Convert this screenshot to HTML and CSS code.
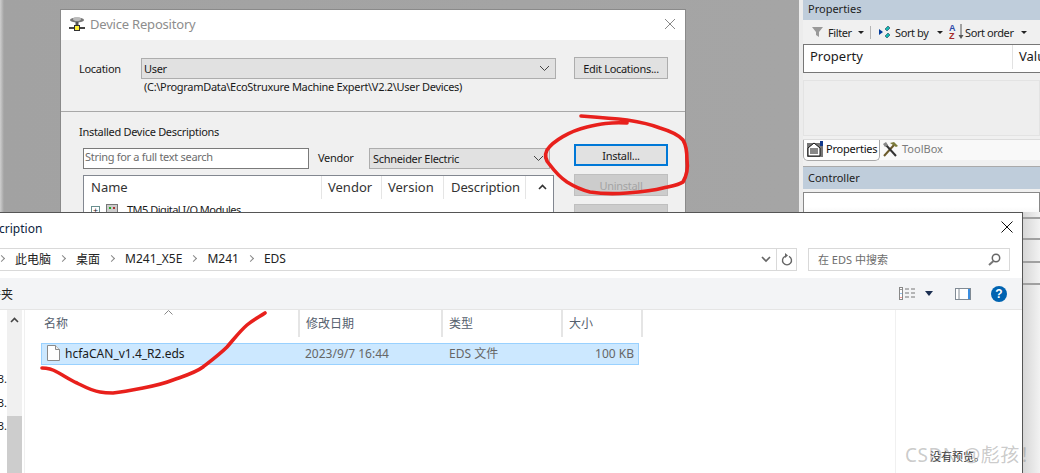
FILE: index.html
```html
<!DOCTYPE html>
<html lang="zh">
<head>
<meta charset="utf-8">
<title>Device Repository</title>
<link rel="stylesheet" href="styles.css">
</head>
<body>
<div class="desktop">

  <section class="repo">
    <header class="repo-title">
      <svg class="repo-icon" width="18" height="16" viewBox="0 0 18 16"><ellipse cx="8" cy="4" rx="7" ry="2.5" fill="#777"/><ellipse cx="8" cy="3" rx="4" ry="2" fill="#bbb"/><rect x="6.500" y="6" width="3" height="4" fill="#555"/><rect x="0" y="11" width="16" height="2" fill="#444"/><rect x="5.500" y="9.500" width="5" height="5" fill="#ffee33" stroke="#333"/></svg>
      <span class="repo-name">Device Repository</span>
      <svg class="close-light" width="12" height="12" viewBox="0 0 12 12"><path d="M1 1l10 10M11 1L1 11" stroke="#888" fill="none"/></svg>
    </header>
    <div class="repo-location">
      <span class="label-loc">Location</span>
      <div class="loc-fields">
        <div class="select select-wide"><span>User</span><svg width="11" height="7" viewBox="0 0 11 7"><path d="M1 1l4.500 4.500L10 1" stroke="#444" fill="none"/></svg></div>
        <div class="loc-path">(C:\ProgramData\EcoStruxure Machine Expert\V2.2\User Devices)</div>
      </div>
      <button class="btn btn-edit">Edit Locations...</button>
    </div>
    <div class="repo-installed">
      <div class="installed-main">
        <div class="installed-title">Installed Device Descriptions</div>
        <div class="search-row">
          <div class="search-input">String for a full text search</div>
          <span class="vendor-label">Vendor</span>
          <div class="select select-vendor"><span>Schneider Electric</span><svg width="11" height="7" viewBox="0 0 11 7"><path d="M1 1l4.500 4.500L10 1" stroke="#444" fill="none"/></svg></div>
        </div>
        <div class="list">
          <div class="list-head">
            <span class="col col-name">Name</span>
            <span class="col col-vendor">Vendor</span>
            <span class="col col-version">Version</span>
            <span class="col col-desc">Description</span>
            <span class="col col-scroll"><svg width="9" height="6" viewBox="0 0 9 6"><path d="M1 5l3.500-3.500L8 5" stroke="#333" stroke-width="1.600" fill="none"/></svg></span>
          </div>
          <div class="list-row">
            <span class="plus">+</span>
            <svg width="12" height="12" viewBox="0 0 12 12"><rect x=".5" y=".5" width="11" height="11" fill="#ccc" stroke="#777"/><rect x="3" y="3" width="2" height="2" fill="#2a2"/><rect x="7" y="3" width="2" height="2" fill="#a33"/></svg>
            <span class="row-text">TM5 Digital I/O Modules</span>
          </div>
        </div>
      </div>
      <div class="installed-buttons">
        <button class="btn btn-primary">Install...</button>
        <button class="btn btn-off">Uninstall</button>
        <button class="btn btn-off">Export</button>
      </div>
    </div>
  </section>

  <aside class="side">
    <div class="side-head">Properties</div>
    <div class="side-tools">
      <svg class="ic-filter" width="11" height="10" viewBox="0 0 11 10"><path d="M0 0h11L7 5v5L4 8V5z" fill="#999"/></svg>
      <span class="tool-text t-filter">Filter</span><i class="caret c-filter"></i><i class="tool-sep"></i>
      <svg class="ic-sortby" width="12" height="13" viewBox="0 0 12 13"><path d="M0 3l4 3-4 3z" fill="#003b9b"/><path d="M6 3l3-3 2 2-3 3zM6 10l3-3 2 2-3 3z" fill="#14b8b0" stroke="#124" stroke-width=".5"/></svg>
      <span class="tool-text t-sortby">Sort by</span><i class="caret c-sortby"></i>
      <svg class="ic-order" width="16" height="16" viewBox="0 0 16 16"><text x="0" y="7" class="az az-a">A</text><text x="0" y="15" class="az az-z">Z</text><path d="M12 0v11" stroke="#555"/><path d="M9.500 11h5L12 15z" fill="#555"/></svg>
      <span class="tool-text">Sort order</span><i class="caret c-order"></i>
    </div>
    <div class="grid-head"><span class="grid-prop">Property</span><span class="grid-val">Value</span></div>
    <div class="side-desc"></div>
    <div class="tabs">
      <div class="tab tab-on">
        <svg width="16" height="16" viewBox="0 0 16 16"><rect x="0" y="2" width="16" height="14" fill="#777"/><path d="M1 7l6-5 6 5v8H1z" fill="#fff" stroke="#111"/><path d="M3 8h8M3 10h8M3 12h8" stroke="#111"/><rect x="13" y="0" width="3" height="5" fill="#123a8c"/></svg>
        <span>Properties</span>
      </div>
      <div class="tab tab-off">
        <svg width="16" height="16" viewBox="0 0 16 16"><path d="M2 15L12 4" stroke="#6b5a2a" stroke-width="2"/><path d="M8 2l4-1 4 4-2 1-3-2z" fill="#7b7b3a"/><path d="M14 15L4 4" stroke="#333" stroke-width="2"/><path d="M1 3l3-2 2 3-3 2z" fill="#888"/></svg>
        <span>ToolBox</span>
      </div>
    </div>
    <div class="side-head side-head-2">Controller</div>
    <div class="side-box"></div>
  </aside>

  <div class="backstrip"></div>

  <section class="file">
    <header class="file-title">
      <span class="file-name">Install Device Description</span>
      <svg class="close-dark" width="12" height="12" viewBox="0 0 12 12"><path d="M.5.5l11 11M11.500.5l-11 11" stroke="#111" fill="none"/></svg>
    </header>
    <div class="file-nav">
      <div class="address">
        <div class="crumbs">
          <i class="chev"></i><span>此电脑</span><i class="chev"></i><span>桌面</span><i class="chev"></i><span>M241_X5E</span><i class="chev"></i><span>M241</span><i class="chev"></i><span>EDS</span>
        </div>
        <svg class="addr-down" width="10" height="7" viewBox="0 0 10 7"><path d="M1 1l4 4 4-4" stroke="#666" stroke-width="1.700" fill="none"/></svg>
        <div class="refresh"><svg width="12" height="13" viewBox="0 0 12 13"><path d="M4 3.300a4.500 4.500 0 1 0 4 0" stroke="#666" stroke-width="1.400" fill="none"/><path d="M5 0v5l3-2.500z" fill="#666" transform="translate(-1 0)"/></svg></div>
      </div>
      <div class="search-box">
        <span>在 EDS 中搜索</span>
        <svg width="13" height="13" viewBox="0 0 13 13"><circle cx="8" cy="5" r="3.700" stroke="#666" stroke-width="1.500" fill="none"/><path d="M5.500 8L1 12" stroke="#777" stroke-width="2"/></svg>
      </div>
    </div>
    <div class="file-tools">
      <span class="new-folder">新建文件夹</span>
      <div class="tool-icons">
        <svg class="ic-views" width="16" height="13" viewBox="0 0 16 13"><rect x=".5" y=".5" width="3" height="12" fill="#fff" stroke="#888"/><rect x="1.500" y="2" width="1" height="1" fill="#333"/><rect x="1.500" y="6" width="1" height="1" fill="#2a7fd5"/><rect x="1.500" y="10" width="1" height="1" fill="#d33"/><path d="M6 2h4M12 2h4M6 6h4M12 6h4M6 10h4M12 10h4" stroke="#777"/></svg>
        <svg class="ic-drop" width="8" height="5" viewBox="0 0 8 5"><path d="M0 0h8L4 5z" fill="#1c2f52"/></svg>
        <svg class="ic-pane" width="16" height="12" viewBox="0 0 16 12"><rect x=".5" y=".5" width="15" height="11" fill="#fff" stroke="#808a94"/><path d="M4 1v10" stroke="#808a94"/><rect x="13" y="1" width="2" height="10" fill="#3b8ee0"/></svg>
        <span class="help">?</span>
      </div>
    </div>
    <div class="file-main">
      <div class="nav-pane">
        <div class="nav-labels"><span>3.</span><span>3.</span><span>3.</span></div>
        <div class="nav-scroll">
          <svg class="nav-up" width="9" height="6" viewBox="0 0 9 6"><path d="M1 5l3.500-3.500L8 5" stroke="#444" stroke-width="1.600" fill="none"/></svg>
          <div class="nav-thumb"></div>
        </div>
      </div>
      <div class="files">
        <div class="file-cols">
          <span class="fc fc-name">名称<svg class="sort-up" width="9" height="5" viewBox="0 0 9 5"><path d="M.5 4.500l4-4 4 4" stroke="#888" fill="none"/></svg></span>
          <span class="fc fc-date">修改日期</span>
          <span class="fc fc-type">类型</span>
          <span class="fc fc-size">大小</span>
        </div>
        <div class="file-row">
          <span class="fr-name">
            <svg width="13" height="16" viewBox="0 0 13 16"><path d="M.5.5h8l4 4v11H.5z" fill="#fff" stroke="#8a8a8a"/><path d="M8.500.5v4h4" fill="#eee" stroke="#8a8a8a"/></svg>
            <span>hcfaCAN_v1.4_R2.eds</span>
          </span>
          <span class="fr-date">2023/9/7 16:44</span>
          <span class="fr-type">EDS 文件</span>
          <span class="fr-size">100 KB</span>
        </div>
      </div>
      <div class="preview"><span>没有预览。</span></div>
    </div>
  </section>

  <svg class="ink" width="1040" height="473" viewBox="0 0 1040 473">
    <path d="M627 123C610 122 600 124 587 127C570 131 553 141 547 150C544 156 546 161 550 165C556 173 561 178 567 182C575 187 582 190 590 192C603 194 615 194 627 193C640 192 652 191 663 188C672 186 679 185 683 182C687 175 688 167 687 160C687 150 686 145 683 140C678 134 670 131 660 128C650 124 640 122 627 120C610 118 595 117 581 116" class="ink-line"/>
    <path d="M42 368C47 368 52 369 57 372C63 375 70 380 77 383C85 387 92 391 100 392C105 393 109 393 113 393C123 392 133 390 143 388C153 386 163 384 173 380C184 376 195 373 203 367C212 360 220 354 227 347C234 339 240 331 247 325C253 320 259 317 265 313" class="ink-line"/>
  </svg>

  <div class="watermark">CSDN @彪孩！</div>
</div>
</body>
</html>
```
FILE: styles.css
```css
* { box-sizing: border-box; }
html, body { margin: 0; padding: 0; }
body {
  width: 1040px;
  height: 473px;
  overflow: hidden;
  font-family: "Noto Sans", "Noto Sans CJK SC", sans-serif;
  font-size: 11px;
  color: #1a1a1a;
}
.desktop {
  position: relative;
  width: 1040px;
  height: 473px;
  overflow: hidden;
  background: linear-gradient(90deg, #cfcfcf 0, #a2a2a2 4px, #a6a6a6 100%);
}

/* Device repository window */
.repo {
  position: absolute;
  left: 60px;
  top: 9px;
  width: 626px;
  height: 240px;
  background: #f0f0f0;
  border: 1px solid #8a8a8a;
  letter-spacing: -.3px;
}
.repo-title {
  display: flex;
  align-items: center;
  height: 30px;
  padding: 0 9px 2px 8px;
  background: #fff;
}
.repo-icon { margin-right: 3px; }
.repo-name { font-size: 13px; letter-spacing: -.2px; color: #8d8d8d; flex: 1; }
.repo-location {
  display: flex;
  align-items: flex-start;
  height: 72px;
  padding: 18px 16px 0 18px;
  border-bottom: 1px solid #a8a8a8;
}
.label-loc { width: 62px; line-height: 22px; }
.loc-fields { width: 415px; }
.select {
  display: flex;
  align-items: center;
  justify-content: space-between;
  height: 21px;
  padding: 0 3px 0 2px;
  background: #e1e1e1;
  border: 1px solid #adadad;
}
.select svg { margin-right: 2px; flex: none; }
.loc-path { padding: 1px 0 0 3px; line-height: 14px; white-space: nowrap; }
.btn {
  display: block;
  width: 94px;
  height: 22px;
  padding: 0;
  font: inherit;
  letter-spacing: inherit;
  color: #1a1a1a;
  background: #e1e1e1;
  border: 1px solid #adadad;
}
.btn-edit { margin: -1px 0 0 18px; }
.btn-primary { border: 2px solid #0078d7; }
.btn-off { color: #a4a4a4; background: #cccccc; border-color: #bfbfbf; }
.repo-installed {
  display: flex;
  padding: 12px 17px 0 18px;
}
.installed-main { width: 475px; }
.installed-title { line-height: 15px; }
.search-row {
  display: flex;
  align-items: center;
  margin: 8px 0 0 4px;
}
.search-input {
  width: 226px;
  height: 21px;
  line-height: 16px;
  padding-left: 1px;
  background: #fff;
  border: 1px solid #7a7a7a;
  color: #6d6d6d;
}
.vendor-label { width: 60px; padding-left: 9px; margin-bottom: 2px; }
.select-vendor { width: 181px; margin-top: 1px; padding-left: 3px; }
.list {
  margin: 6px 0 0 4px;
  width: 471px;
  height: 60px;
  background: #fff;
  border: 1px solid #828790;
}
.list-head {
  display: flex;
  height: 24px;
  font-size: 13px;
  letter-spacing: 0;
  color: #333;
}
.col {
  display: flex;
  align-items: center;
  height: 23px;
  padding: 0 0 2px 7px;
  border-right: 1px solid #e5e5e5;
}
.col-name { width: 238px; }
.col-vendor { width: 60px; padding-left: 6px; }
.col-version { width: 62px; padding-left: 6px; }
.col-desc { width: 82px; padding-left: 7px; letter-spacing: -.1px; }
.col-scroll { border: 0; padding-left: 12px; }
.list-row {
  display: flex;
  align-items: center;
  margin-top: 3px;
  padding-left: 7px;
  line-height: 14px;
}
.plus {
  width: 9px;
  height: 9px;
  margin-right: 6px;
  border: 1px solid #6a8f8f;
  font-size: 9px;
  line-height: 7px;
  text-align: center;
}
.row-text { margin-left: 9px; letter-spacing: -.5px; }
.installed-buttons {
  display: flex;
  flex-direction: column;
  gap: 8px;
  margin: 20px 0 0 20px;
}

/* Right dock */
.side {
  position: absolute;
  left: 799px;
  top: 0;
  width: 241px;
  height: 240px;
  background: #f0f0f0;
  border-left: 4px solid #ececec;
}
.side-head {
  height: 20px;
  padding-left: 5px;
  line-height: 18px;
  background: #bfcddb;
  color: #222;
}
.side-tools {
  display: flex;
  align-items: center;
  height: 24px;
  padding-left: 9px;
  color: #222;
}
.ic-filter { margin-right: 5px; }
.tool-text { white-space: nowrap; letter-spacing: -.4px; }
.t-filter { width: 24px; }
.t-sortby { width: 36px; }
.caret {
  width: 0;
  height: 0;
  border-left: 3px solid transparent;
  border-right: 3px solid transparent;
  border-top: 3px solid #222;
}
.c-filter { margin: 0 0 0 6px; }
.tool-sep { width: 1px; height: 13px; margin: 0 8px 0 6px; background: #b5b5b5; }
.ic-sortby { margin-right: 4px; }
.c-sortby { margin: 0 6px 0 6px; }
.ic-order { margin-right: 0; }
.c-order { margin-left: 7px; }
.az { font-family: "Liberation Sans", sans-serif; font-size: 9px; font-weight: 700; }
.az-a { fill: #2b48a8; }
.az-z { fill: #a52a2a; }
.grid-head {
  display: flex;
  height: 29px;
  background: #fff;
  border: 1px solid #777;
  border-right: 0;
  font-size: 13px;
  overflow: hidden;
}
.grid-prop { flex: none; width: 209px; padding-left: 6px; line-height: 23px; height: 24px; border-right: 1px solid #e2e2e2; }
.grid-val { flex: none; padding-left: 6px; line-height: 23px; }
.side-desc {
  height: 56px;
  margin-top: 7px;
  background: #eeeeee;
  border: 1px solid #e3e3e3;
}
.tabs {
  display: flex;
  height: 21px;
  margin-top: 3px;
  background: #f9f9f9;
  border-top: 1px solid #dcdcdc;
}
.tab { display: flex; align-items: center; gap: 3px; height: 21px; padding-bottom: 3px; }
.tab-on {
  width: 77px;
  padding-left: 3px;
  background: #fff;
  border: 1px solid #a8a8a8;
  border-top: 0;
  border-radius: 0 0 5px 5px;
  letter-spacing: -.2px;
  color: #111;
}
.tab-off { padding: 0 0 4px 2px; gap: 4px; color: #7b7b7b; }
.side-head-2 {
  height: 23px;
  margin-top: 6px;
  line-height: 21px;
  border-top: 1px solid #aaa;
}
.side-box {
  height: 30px;
  margin-top: 3px;
  border: 1px solid #888;
  background: linear-gradient(#fff 50%, #ececec);
}
.backstrip {
  position: absolute;
  left: 1020px;
  top: 212px;
  width: 20px;
  height: 261px;
  background:
    linear-gradient(#a0a0a0, #a0a0a0) 0 5px / 100% 2px no-repeat,
    linear-gradient(#a0a0a0, #a0a0a0) 0 26px / 100% 2px no-repeat,
    linear-gradient(#a0a0a0, #a0a0a0) 0 49px / 100% 2px no-repeat,
    linear-gradient(#a0a0a0, #a0a0a0) 0 71px / 100% 2px no-repeat,
    linear-gradient(90deg, #d2d2d2, #f2f2f2);
}

/* File dialog */
.file {
  position: absolute;
  left: -200px;
  top: 212px;
  width: 1223px;
  height: 261px;
  display: flex;
  flex-direction: column;
  background: #fff;
  border-top: 1px solid #555;
  border-right: 1px solid #555;
}
.file-title {
  display: flex;
  align-items: center;
  justify-content: space-between;
  height: 30px;
  padding: 0 9px 0 100px;
  flex: none;
}
.file-name { font-size: 12px; color: #0c2340; white-space: nowrap; }
.close-dark { margin-top: -3px; }
.file-nav {
  display: flex;
  height: 23px;
  flex: none;
  margin-top: 5px;
}
.address {
  display: flex;
  align-items: center;
  width: 997px;
  height: 23px;
  border: 1px solid #d9d9d9;
  border-left: 0;
}
.crumbs {
  display: flex;
  align-items: center;
  flex: 1;
  padding: 0 0 2px 199px;
  font-size: 12px;
  color: #222;
}
.chev {
  width: 5px;
  height: 5px;
  margin: 0 11px 0 0;
  border-top: 1.500px solid #888;
  border-right: 1.500px solid #888;
  transform: rotate(45deg);
}
.crumbs span { margin-right: 9px; white-space: nowrap; }
.crumbs span:last-child { margin-right: 0; }
.addr-down { margin-right: 5px; }
.refresh {
  display: flex;
  align-items: center;
  justify-content: center;
  width: 20px;
  height: 21px;
  border-left: 1px solid #d9d9d9;
}
.search-box {
  display: flex;
  align-items: center;
  justify-content: space-between;
  width: 202px;
  margin-left: 11px;
  padding: 0 8px 1px 9px;
  border: 1px solid #d9d9d9;
  color: #6d6d6d;
}
.file-tools {
  display: flex;
  align-items: center;
  justify-content: space-between;
  flex: none;
  height: 32px;
  margin-top: 7px;
  background: #f3f4f6;
  border-bottom: 1px solid #e5e5e5;
  font-size: 12px;
}
.new-folder { margin-left: 153px; white-space: nowrap; color: #222; }
.tool-icons { display: flex; align-items: center; padding-right: 15px; }
.ic-drop { margin: 0 22px 0 10px; }
.ic-pane { margin-right: 20px; }
.help {
  width: 16px;
  height: 16px;
  border-radius: 50%;
  background: #0063b1;
  color: #fff;
  font: 700 12px/16px "Liberation Sans", sans-serif;
  text-align: center;
}
.file-main { display: flex; flex: 1; min-height: 0; }
.nav-pane {
  display: flex;
  flex: none;
  width: 225px;
  border-right: 1px solid #f0f0f0;
}
.nav-labels {
  display: flex;
  flex-direction: column;
  align-items: flex-end;
  width: 207px;
  padding-top: 57px;
  line-height: 23.500px;
}
.nav-scroll {
  width: 15px;
  background: #f0f0f0;
  padding: 7px 0 0 3px;
}
.nav-up { display: block; }
.nav-thumb {
  margin: 93px 0 0 -3px;
  height: 60px;
  background: #cdcdcd;
}
.files { flex: none; width: 871px; border-right: 1px solid #f0f0f0; }
.file-cols { display: flex; height: 27px; font-size: 12px; color: #55606e; }
.fc { position: relative; padding: 5px 0 0 6px; border-right: 2px solid #e5e5e5; line-height: 18px; }
.fc-name { width: 275px; padding-left: 19px; }
.fc-date { width: 143px; }
.fc-type { width: 120px; }
.fc-size { width: 80px; }
.sort-up { position: absolute; left: 139px; top: 0; }
.file-row {
  display: flex;
  align-items: center;
  width: 598px;
  height: 22px;
  margin: 6px 0 0 16px;
  padding-bottom: 2px;
  background: #cce8ff;
  border: 1px solid #99d1ff;
  font-size: 12px;
  color: #666;
}
.fr-name { display: flex; align-items: center; gap: 5px; width: 263px; padding-left: 5px; color: #1a1a1a; }
.fr-date { width: 144px; }
.fr-type { width: 120px; }
.fr-size { width: 65px; text-align: right; }
.preview {
  display: flex;
  flex: 1;
  align-items: flex-end;
  justify-content: flex-end;
  padding: 0 37px 9px 0;
  color: #333;
}

/* Overlays */
.ink { position: absolute; left: 0; top: 0; pointer-events: none; }
.ink-line { fill: none; stroke: #e8201c; stroke-width: 3.600; stroke-linecap: round; stroke-linejoin: round; }
.watermark {
  position: absolute;
  left: 905px;
  top: 441px;
  font-size: 19px;
  line-height: 28px;
  letter-spacing: .5px;
  color: rgba(120, 120, 120, .4);
  white-space: nowrap;
}
```
